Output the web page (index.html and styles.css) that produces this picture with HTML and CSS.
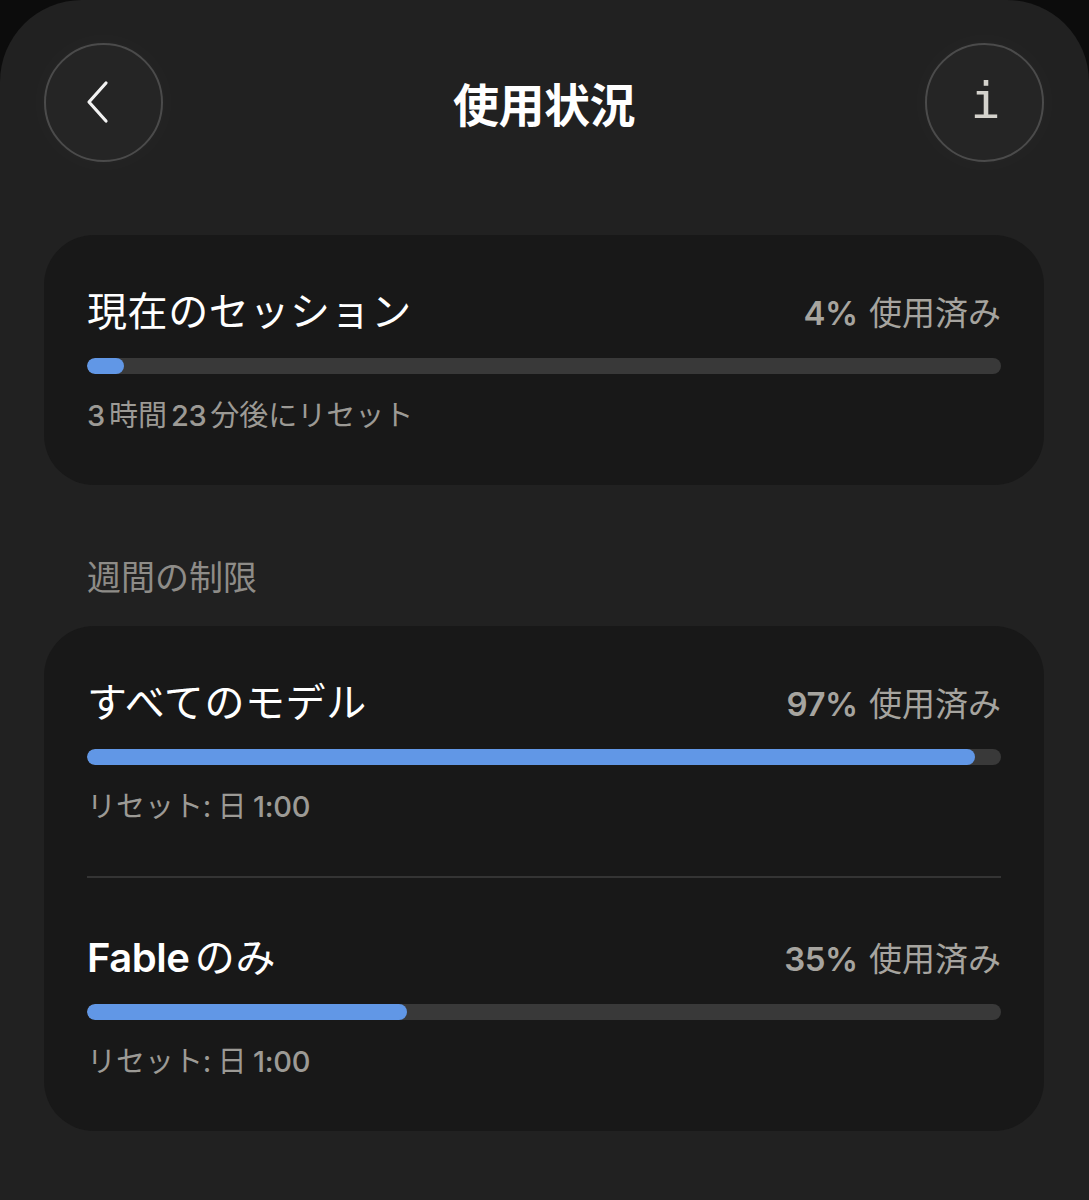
FILE: index.html
```html
<!DOCTYPE html>
<html lang="ja">
<head>
<meta charset="utf-8">
<title>使用状況</title>
<link rel="stylesheet" href="styles.css">
</head>
<body>
<div class="panel">
  <header class="header">
    <button class="circle-btn" aria-label="戻る">
      <svg width="40" height="48" viewBox="0 0 40 48"><path d="M26 5 L9 24 L26 43" fill="none" stroke="#f2f2f2" stroke-width="3.2" stroke-linecap="round" stroke-linejoin="round"/></svg>
    </button>
    <h1 class="title">使用状況</h1>
    <button class="circle-btn info" aria-label="情報">i</button>
  </header>

  <section class="card">
    <div class="item">
      <div class="row">
        <span class="item-title">現在のセッション</span>
        <span class="used"><b>4%</b> 使用済み</span>
      </div>
      <div class="track"><div class="fill" style="width:4%"></div></div>
      <div class="sub"><span class="num first">3</span>時間<span class="num">23</span>分後にリセット</div>
    </div>
  </section>

  <div class="section-label">週間の制限</div>

  <section class="card">
    <div class="item">
      <div class="row">
        <span class="item-title">すべてのモデル</span>
        <span class="used"><b>97%</b> 使用済み</span>
      </div>
      <div class="track"><div class="fill" style="width:97.2%"></div></div>
      <div class="sub">リセット: 日 <span class="num first">1:00</span></div>
    </div>
    <div class="divider"></div>
    <div class="item">
      <div class="row">
        <span class="item-title"><span class="latin">Fable</span> のみ</span>
        <span class="used"><b>35%</b> 使用済み</span>
      </div>
      <div class="track"><div class="fill" style="width:35%"></div></div>
      <div class="sub">リセット: 日 <span class="num first">1:00</span></div>
    </div>
  </section>
</div>
</body>
</html>
```

FILE: styles.css
```css
html, body {
  margin: 0;
  padding: 0;
  background: #0c0c0c;
}
body {
  font-family: "Inter", "Noto Sans CJK JP", sans-serif;
  color: #fff;
}
.panel {
  background: #212121;
  border-radius: 82px 82px 0 0;
  min-height: 1200px;
  padding: 43px 45px 0 44px;
  box-sizing: border-box;
}
.header {
  display: flex;
  align-items: center;
  justify-content: space-between;
  height: 118px;
}
.circle-btn {
  width: 119px;
  height: 119px;
  border-radius: 50%;
  border: 2px solid #4b4b4b;
  background: #252525;
  box-shadow: 0 0 24px 6px rgba(255, 255, 255, 0.018);
  display: flex;
  align-items: center;
  justify-content: center;
  padding: 0;
  box-sizing: border-box;
}
.circle-btn svg {
  margin-left: -8px;
}
.info {
  font-family: "DejaVu Sans Mono", monospace;
  font-size: 50px;
  color: #d4d2cc;
  line-height: 1;
  padding-bottom: 2px;
  padding-left: 2px;
}
.title {
  margin: 0;
  font-family: "Noto Sans CJK JP", sans-serif;
  font-weight: 700;
  font-size: 46px;
  color: #fff;
  letter-spacing: -0.5px;
}
.card {
  margin-top: 74px;
  background: #181818;
  border-radius: 50px;
  padding: 0 43px;
}
.item {
  padding: 50px 0 50px;
}
.divider + .item {
  padding-top: 53px;
}
.row {
  display: flex;
  justify-content: space-between;
  align-items: center;
  height: 48px;
}
.item-title {
  font-size: 40px;
  font-weight: 400;
  color: #fff;
  font-family: "Noto Sans CJK JP", sans-serif;
  letter-spacing: 0.6px;
}
.latin {
  font-family: "Inter", sans-serif;
  font-weight: 600;
  letter-spacing: -0.5px;
  margin-right: -4px;
}
.used {
  font-size: 33px;
  color: #a6a49f;
  font-family: "Noto Sans CJK JP", sans-serif;
  padding-top: 4px;
}
.used b {
  font-family: "Inter", sans-serif;
  font-weight: 600;
  letter-spacing: -0.5px;
  margin-right: 4px;
}
.track {
  margin-top: 25px;
  height: 16px;
  border-radius: 8px;
  background: #393939;
  overflow: hidden;
}
.fill {
  height: 100%;
  border-radius: 8px;
  background: #6197e6;
}
.sub {
  margin-top: 20px;
  font-size: 29px;
  line-height: 39px;
  color: #9c9a95;
  font-family: "Noto Sans CJK JP", sans-serif;
}
.num {
  font-family: "Inter", sans-serif;
  font-weight: 500;
  letter-spacing: -0.3px;
  margin: 0 4px;
}
.num.first {
  margin-left: 0;
}
.divider {
  height: 2px;
  background: #343434;
}
.section-label {
  margin-top: 69px;
  padding-left: 43px;
  font-size: 34px;
  line-height: 44px;
  color: #8e8c88;
  font-family: "Noto Sans CJK JP", sans-serif;
}
.section-label + .card {
  margin-top: 28px;
}
```
